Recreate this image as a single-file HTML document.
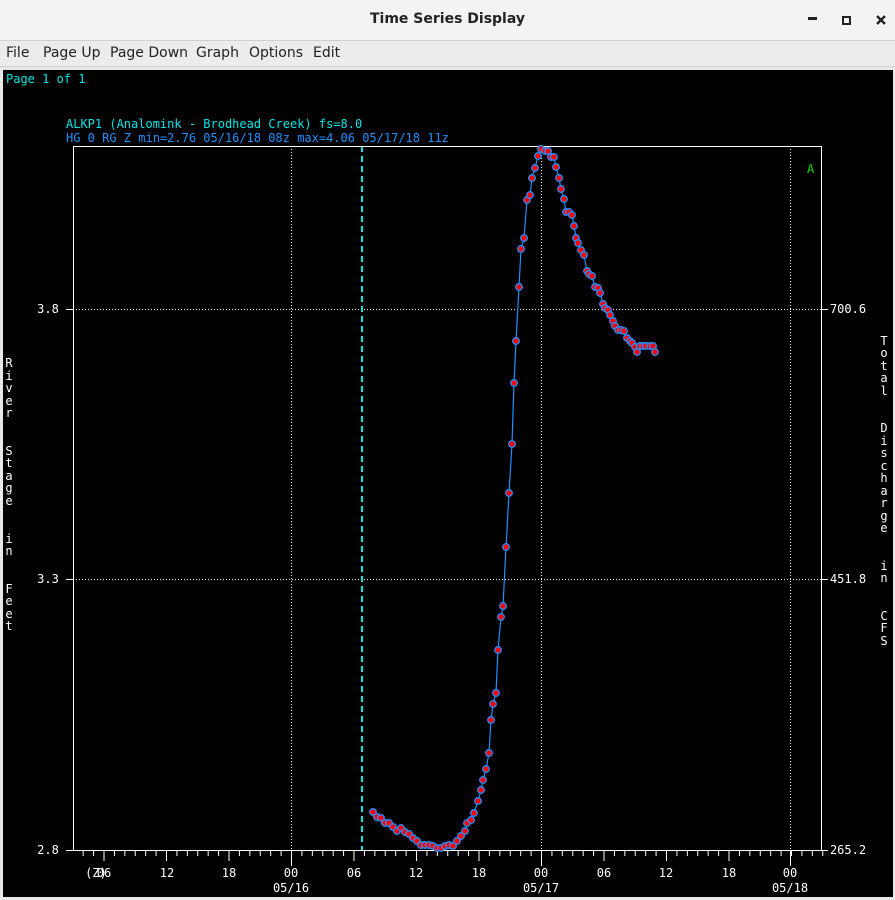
<!DOCTYPE html>
<html><head><meta charset="utf-8"><style>
html,body{margin:0;padding:0;width:895px;height:900px;overflow:hidden;background:#e8e8e8;font-family:"DejaVu Sans","Liberation Sans",sans-serif}
.tb{position:absolute;left:0;top:0;width:895px;height:40px;background:#f3f3f3;border-bottom:1px solid #d0d0d0}
.tb .t{position:absolute;left:0;width:895px;top:11px;text-align:center;font-weight:bold;font-size:14px;color:#222}
.mb{position:absolute;left:0;top:41px;width:895px;height:25px;background:#ececec;border-bottom:1px solid #cfcfcf;font-size:14px;color:#222}
.mb span{position:absolute;top:4px}
svg{position:absolute;left:0;top:0}
</style></head><body>
<div class="tb"><div class="t">Time Series Display</div></div>
<div class="mb"><span style="left:6px">File</span><span style="left:43px">Page Up</span><span style="left:110px">Page Down</span><span style="left:196px">Graph</span><span style="left:249px">Options</span><span style="left:313px">Edit</span></div>
<svg width="895" height="900" xmlns="http://www.w3.org/2000/svg" font-family="DejaVu Sans Mono, Liberation Mono, monospace" font-size="12">
<rect x="808" y="17" width="9" height="3" fill="#222"/>
<rect x="843" y="17" width="7" height="7" fill="none" stroke="#222" stroke-width="2"/>
<path d="M877 16 L885 24 M885 16 L877 24" stroke="#222" stroke-width="2.4"/>
<rect x="3" y="70" width="890" height="827" fill="#000"/>
<text x="6" y="83" fill="#00e5e5">Page 1 of 1</text>
<text x="66" y="128" fill="#00e5e5">ALKP1 (Analomink - Brodhead Creek) fs=8.0</text>
<text x="66" y="142" fill="#1e90ff">HG 0 RG Z min=2.76 05/16/18 08z max=4.06 05/17/18 11z</text>
<g stroke="#fff" stroke-width="1" stroke-dasharray="1 2">
<line x1="73" y1="309.5" x2="821" y2="309.5"/><line x1="73" y1="579.5" x2="821" y2="579.5"/>
<line x1="291.5" y1="146" x2="291.5" y2="850"/><line x1="541.5" y1="146" x2="541.5" y2="850"/><line x1="790.5" y1="146" x2="790.5" y2="850"/>
</g>
<line x1="362" y1="146" x2="362" y2="850" stroke="#00e5e5" stroke-width="2" stroke-dasharray="6 4"/>
<rect x="73.5" y="146.5" width="748" height="704" fill="none" stroke="#fff"/>
<line x1="82.67" y1="853" x2="824" y2="853" stroke="#fff" stroke-width="6" stroke-dasharray="1 9.4167"/>
<path stroke="#fff" d="M66 850.5H73M821 850.5H828M66 309.5H73M821 309.5H828M66 579.5H73M821 579.5H828
M104 850V861M166.5 850V861M229 850V861M354 850V861M416.5 850V861M479 850V861M604 850V861M666.5 850V861M729 850V861
M291.5 850V866M541.5 850V866M790.5 850V866"/>
<g fill="#fff" text-anchor="middle">
<text x="48" y="854">2.8</text><text x="48" y="583">3.3</text><text x="48" y="313">3.8</text>
<text x="848" y="854">265.2</text><text x="848" y="583">451.8</text><text x="848" y="313">700.6</text>
<text x="96" y="877">(Z)</text><text x="104" y="877">06</text><text x="167" y="877">12</text><text x="229" y="877">18</text><text x="291" y="877">00</text>
<text x="354" y="877">06</text><text x="416" y="877">12</text><text x="479" y="877">18</text><text x="541" y="877">00</text>
<text x="604" y="877">06</text><text x="666" y="877">12</text><text x="729" y="877">18</text><text x="790" y="877">00</text>
<text x="291" y="892">05/16</text><text x="541" y="892">05/17</text><text x="790" y="892">05/18</text>
</g>
<text x="807" y="173" fill="#00dd00">A</text>
<g fill="#fff" text-anchor="middle">
<text x="9" y="367">R</text><text x="9" y="380">i</text><text x="9" y="392">v</text><text x="9" y="405">e</text><text x="9" y="417">r</text>
<text x="9" y="455">S</text><text x="9" y="467">t</text><text x="9" y="480">a</text><text x="9" y="492">g</text><text x="9" y="505">e</text>
<text x="9" y="543">i</text><text x="9" y="555">n</text>
<text x="9" y="593">F</text><text x="9" y="605">e</text><text x="9" y="618">e</text><text x="9" y="630">t</text>
<text x="884" y="345">T</text><text x="884" y="357">o</text><text x="884" y="370">t</text><text x="884" y="382">a</text><text x="884" y="395">l</text>
<text x="884" y="432">D</text><text x="884" y="445">i</text><text x="884" y="457">s</text><text x="884" y="470">c</text><text x="884" y="482">h</text><text x="884" y="495">a</text><text x="884" y="507">r</text><text x="884" y="520">g</text><text x="884" y="532">e</text>
<text x="884" y="570">i</text><text x="884" y="582">n</text>
<text x="884" y="620">C</text><text x="884" y="632">F</text><text x="884" y="645">S</text>
</g>
<polyline id="d" fill="none" stroke="#1e90ff" stroke-width="1.2" points="373,812 377,817 381,818 385,823 389,823 393,827 397,831 401,828 405,832 409,834 413,838 417,841 421,845 425,845 429,845 433,846 437,848 441,848 445,846 449,845 453,846 457,841 461,836 465,831 467,823 471,820 474,813 478,801 481,790 483,780 486,769 489,753 491,720 493,704 496,693 498,650 501,617 503,606 506,547 509,493 512,444 514,383 516,341 519,287 521,249 524,238 527,200 530,195 532,178 535,168 538,156 541,149 545,151 548,151 551,157 554,157 556,167 559,178 561,189 564,199 566,212 569,212 572,215 574,226 576,238 578,243 581,250 584,255 587,271 589,274 592,276 595,287 598,288 600,293 603,304 605,308 608,310 610,315 613,321 615,326 618,330 621,330 624,331 627,338 630,341 632,343 635,347 637,352 640,346 643,346 646,346 650,346 653,346 655,352"/>
<polyline fill="none" stroke="#1e90ff" stroke-width="9" stroke-linecap="round" stroke-linejoin="round" stroke-dasharray="0 4.5" points="373,812 377,817 381,818 385,823 389,823 393,827 397,831 401,828 405,832 409,834 413,838 417,841 421,845 425,845 429,845 433,846 437,848 441,848 445,846 449,845 453,846 457,841 461,836 465,831 467,823 471,820 474,813 478,801 481,790 483,780 486,769 489,753 491,720 493,704 496,693 498,650 501,617 503,606 506,547 509,493 512,444 514,383 516,341 519,287 521,249 524,238 527,200 530,195 532,178 535,168 538,156 541,149 545,151 548,151 551,157 554,157 556,167 559,178 561,189 564,199 566,212 569,212 572,215 574,226 576,238 578,243 581,250 584,255 587,271 589,274 592,276 595,287 598,288 600,293 603,304 605,308 608,310 610,315 613,321 615,326 618,330 621,330 624,331 627,338 630,341 632,343 635,347 637,352 640,346 643,346 646,346 650,346 653,346 655,352" opacity="0"/>
<g fill="#ff0000" stroke="#1e90ff" stroke-width="1.3">
<circle cx="373" cy="812" r="3.3"/><circle cx="377" cy="817" r="3.3"/><circle cx="381" cy="818" r="3.3"/><circle cx="385" cy="823" r="3.3"/><circle cx="389" cy="823" r="3.3"/><circle cx="393" cy="827" r="3.3"/><circle cx="397" cy="831" r="3.3"/><circle cx="401" cy="828" r="3.3"/><circle cx="405" cy="832" r="3.3"/><circle cx="409" cy="834" r="3.3"/><circle cx="413" cy="838" r="3.3"/><circle cx="417" cy="841" r="3.3"/><circle cx="421" cy="845" r="3.3"/><circle cx="425" cy="845" r="3.3"/><circle cx="429" cy="845" r="3.3"/><circle cx="433" cy="846" r="3.3"/><circle cx="437" cy="848" r="3.3"/><circle cx="441" cy="848" r="3.3"/><circle cx="445" cy="846" r="3.3"/><circle cx="449" cy="845" r="3.3"/><circle cx="453" cy="846" r="3.3"/><circle cx="457" cy="841" r="3.3"/><circle cx="461" cy="836" r="3.3"/><circle cx="465" cy="831" r="3.3"/><circle cx="467" cy="823" r="3.3"/><circle cx="471" cy="820" r="3.3"/><circle cx="474" cy="813" r="3.3"/><circle cx="478" cy="801" r="3.3"/><circle cx="481" cy="790" r="3.3"/><circle cx="483" cy="780" r="3.3"/><circle cx="486" cy="769" r="3.3"/><circle cx="489" cy="753" r="3.3"/><circle cx="491" cy="720" r="3.3"/><circle cx="493" cy="704" r="3.3"/><circle cx="496" cy="693" r="3.3"/><circle cx="498" cy="650" r="3.3"/><circle cx="501" cy="617" r="3.3"/><circle cx="503" cy="606" r="3.3"/><circle cx="506" cy="547" r="3.3"/><circle cx="509" cy="493" r="3.3"/><circle cx="512" cy="444" r="3.3"/><circle cx="514" cy="383" r="3.3"/><circle cx="516" cy="341" r="3.3"/><circle cx="519" cy="287" r="3.3"/><circle cx="521" cy="249" r="3.3"/><circle cx="524" cy="238" r="3.3"/><circle cx="527" cy="200" r="3.3"/><circle cx="530" cy="195" r="3.3"/><circle cx="532" cy="178" r="3.3"/><circle cx="535" cy="168" r="3.3"/><circle cx="538" cy="156" r="3.3"/><circle cx="541" cy="149" r="3.3"/><circle cx="545" cy="151" r="3.3"/><circle cx="548" cy="151" r="3.3"/><circle cx="551" cy="157" r="3.3"/><circle cx="554" cy="157" r="3.3"/><circle cx="556" cy="167" r="3.3"/><circle cx="559" cy="178" r="3.3"/><circle cx="561" cy="189" r="3.3"/><circle cx="564" cy="199" r="3.3"/><circle cx="566" cy="212" r="3.3"/><circle cx="569" cy="212" r="3.3"/><circle cx="572" cy="215" r="3.3"/><circle cx="574" cy="226" r="3.3"/><circle cx="576" cy="238" r="3.3"/><circle cx="578" cy="243" r="3.3"/><circle cx="581" cy="250" r="3.3"/><circle cx="584" cy="255" r="3.3"/><circle cx="587" cy="271" r="3.3"/><circle cx="589" cy="274" r="3.3"/><circle cx="592" cy="276" r="3.3"/><circle cx="595" cy="287" r="3.3"/><circle cx="598" cy="288" r="3.3"/><circle cx="600" cy="293" r="3.3"/><circle cx="603" cy="304" r="3.3"/><circle cx="605" cy="308" r="3.3"/><circle cx="608" cy="310" r="3.3"/><circle cx="610" cy="315" r="3.3"/><circle cx="613" cy="321" r="3.3"/><circle cx="615" cy="326" r="3.3"/><circle cx="618" cy="330" r="3.3"/><circle cx="621" cy="330" r="3.3"/><circle cx="624" cy="331" r="3.3"/><circle cx="627" cy="338" r="3.3"/><circle cx="630" cy="341" r="3.3"/><circle cx="632" cy="343" r="3.3"/><circle cx="635" cy="347" r="3.3"/><circle cx="637" cy="352" r="3.3"/><circle cx="640" cy="346" r="3.3"/><circle cx="643" cy="346" r="3.3"/><circle cx="646" cy="346" r="3.3"/><circle cx="650" cy="346" r="3.3"/><circle cx="653" cy="346" r="3.3"/><circle cx="655" cy="352" r="3.3"/>
</g>
</svg>
</body></html>
